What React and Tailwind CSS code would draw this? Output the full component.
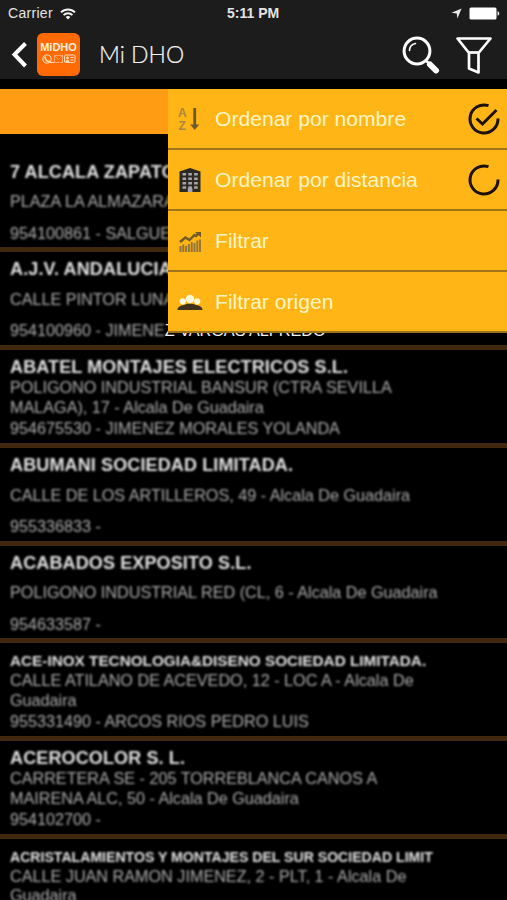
import React, { useState } from "react";

const companies = [
  {
    name: "7 ALCALA ZAPATO",
    address: ["PLAZA LA ALMAZARA"],
    phone: "954100861 - SALGUE",
  },
  {
    name: "A.J.V. ANDALUCIA",
    address: ["CALLE PINTOR LUNA"],
    phone: "954100960 - JIMENE",
    contact: "Z VARGAS ALFREDO",
  },
  {
    name: "ABATEL MONTAJES ELECTRICOS S.L.",
    address: ["POLIGONO INDUSTRIAL BANSUR (CTRA SEVILLA", "MALAGA), 17 - Alcala De Guadaira"],
    phone: "954675530 - JIMENEZ MORALES YOLANDA",
  },
  {
    name: "ABUMANI SOCIEDAD LIMITADA.",
    address: ["CALLE DE LOS ARTILLEROS, 49 - Alcala De Guadaira"],
    phone: "955336833 -",
  },
  {
    name: "ACABADOS EXPOSITO S.L.",
    address: ["POLIGONO INDUSTRIAL RED (CL, 6 - Alcala De Guadaira"],
    phone: "954633587 -",
  },
  {
    name: "ACE-INOX TECNOLOGIA&DISENO SOCIEDAD LIMITADA.",
    size: "text-[15.3px]",
    address: ["CALLE ATILANO DE ACEVEDO, 12 - LOC A - Alcala De", "Guadaira"],
    phone: "955331490 - ARCOS RIOS PEDRO LUIS",
  },
  {
    name: "ACEROCOLOR S. L.",
    address: ["CARRETERA SE - 205 TORREBLANCA CANOS A", "MAIRENA ALC, 50 - Alcala De Guadaira"],
    phone: "954102700 -",
  },
  {
    name: "ACRISTALAMIENTOS Y MONTAJES DEL SUR SOCIEDAD LIMIT",
    size: "text-[14.1px]",
    address: ["CALLE JUAN RAMON JIMENEZ, 2 - PLT, 1 - Alcala De", "Guadaira"],
    phone: "",
  },
];

const StatusBar = () => (
  <div className="relative flex h-[27px] items-center justify-between pl-2 pr-[7px] text-[14px] text-[#e4e4e4]">
    <div className="flex items-center gap-[7px]">
      <span className="tracking-[0.3px]">Carrier</span>
      <svg width="16" height="12" viewBox="0 0 16 12" fill="none" stroke="#f2f2f2" strokeWidth="2">
        <path d="M1 4.4a10 10 0 0 1 14 0" />
        <path d="M3.6 7.1a6.2 6.2 0 0 1 8.8 0" />
        <path d="M8 11.6 5.6 9.1a3.4 3.4 0 0 1 4.8 0z" fill="#f2f2f2" stroke="none" />
      </svg>
    </div>
    <span className="absolute left-[227px] text-[14px] font-bold">5:11 PM</span>
    <div className="flex items-center gap-[7px]">
      <svg width="11" height="11" viewBox="0 0 11 11" fill="#e8e8e8">
        <path d="M10.6.4 6.4 10.4 5.7 5.4.5 4.8z" />
      </svg>
      <svg width="31" height="13" viewBox="0 0 31 13" fill="#fff">
        <rect x="0.5" y="0.5" width="27" height="12" rx="1.5" />
        <path d="M28.6 4.3c2.2.4 2.2 4 0 4.4z" />
      </svg>
    </div>
  </div>
);

const Logo = () => (
  <div className="flex h-[43px] w-[43px] flex-col items-center rounded-[6px] bg-[#ff6a05] pt-[8px]">
    <span className="text-[11px] font-bold leading-[13px] text-[#fff0dc]">MiDHO</span>
    <svg width="34" height="10" viewBox="0 0 34 10" fill="none" stroke="#ffdcb8" strokeWidth="1">
      <circle cx="5" cy="5" r="4.1" />
      <path d="M3 2.5c0 3 2 5 5 5.2" strokeWidth="1.8" />
      <path d="M8 8.5h4" />
      <rect x="12.5" y="1.5" width="8" height="7" stroke="#ffa765" />
      <path d="m13 2 3.5 3.5L20 2" stroke="#ff9850" />
      <rect x="22.5" y="1" width="10.5" height="7.5" rx="1.5" />
      <path d="M24 7.5c0-2 3-2 3 0z" fill="#ffdcb8" />
      <circle cx="25.5" cy="3.8" r="1" fill="#ffdcb8" />
      <path d="M28.5 3.5h3M28.5 6h3" />
    </svg>
  </div>
);

const Header = () => (
  <div className="flex h-[52px] items-start pl-[11px] pt-[6px]">
    <svg className="mt-[8px]" width="17" height="28" viewBox="0 0 17 28" fill="none" stroke="#fff" strokeWidth="4">
      <path d="M14.5 2.5 3.5 13.5l11 11.5" />
    </svg>
    <div className="ml-[9px]">
      <Logo />
    </div>
    <span className="ml-[19px] mt-[5px] font-['Lato',sans-serif] text-[23px] font-light leading-[32px] text-[#f4f4f4] [-webkit-text-stroke:0.2px_#f4f4f4]">
      Mi DHO
    </span>
    <div className="ml-auto flex gap-[15px] pr-[14px] pt-[3px]">
      <svg width="38" height="39" viewBox="0 0 38 39" fill="none" stroke="#fff">
        <circle cx="15" cy="15" r="12.9" strokeWidth="3" />
        <path d="M7.5 14.5a7.5 7.5 0 0 1 6-7" strokeWidth="1.6" strokeLinecap="round" />
        <path d="m24 24.5 3.5 3.5" strokeWidth="2.5" />
        <path d="m28 28.5 6 6" strokeWidth="6" strokeLinecap="round" />
      </svg>
      <svg width="38" height="39" viewBox="0 0 38 39" fill="none" stroke="#fff" strokeWidth="2.7" strokeLinejoin="round">
        <path d="M2.5 2.5h33L23.5 17v19.5l-9.5-4V17z" />
        <path d="M14 16.5h9.5" />
      </svg>
    </div>
  </div>
);

const SortIcon = () => (
  <svg width="24" height="26" viewBox="0 0 24 26">
    <text x="0" y="10.5" fontSize="12" fontWeight="bold" fill="#aa8640">A</text>
    <text x="0.5" y="24" fontSize="12" fontWeight="bold" fill="#aa8640">Z</text>
    <path d="M16.7 2v18" stroke="#6b5935" strokeWidth="2.8" />
    <path d="M12.2 18.5h9L16.7 24z" fill="#6b5935" />
  </svg>
);

const BuildingIcon = () => (
  <svg width="24" height="26" viewBox="0 0 24 26">
    <path d="M1.5 4.5 12 1l10.5 3.5V25h-21z" fill="#2c2822" />
    <g fill="#a4a6ad">
      {[6, 10.5, 15, 19.3].map((y) =>
        [4.5, 10.3, 16.1].map((x) => <rect key={x + "-" + y} x={x} y={y} width="3.6" height="2.5" />)
      )}
      <rect x="9.8" y="21" width="4.6" height="4" />
    </g>
  </svg>
);

const ChartIcon = () => (
  <svg width="24" height="26" viewBox="0 0 24 26">
    <path d="m2 14 5.5-4.5 4 2.5 5-5 1.5 1 3.5-3.5" fill="none" stroke="#6f5a28" strokeWidth="2.4" />
    <path d="M17 4h6v5.5z" fill="#6f5a28" />
    <g fill="#94753a">
      <rect x="1.5" y="18" width="2" height="6" />
      <rect x="4.3" y="16.5" width="2" height="7.5" />
      <rect x="7.1" y="18" width="2" height="6" />
      <rect x="9.9" y="16" width="2" height="8" />
      <rect x="12.7" y="14" width="2" height="10" />
      <rect x="15.5" y="15" width="2" height="9" />
      <rect x="18.3" y="12.5" width="2" height="11.5" />
      <rect x="21" y="11.5" width="2" height="12.5" />
    </g>
  </svg>
);

const PeopleIcon = () => (
  <svg width="26" height="26" viewBox="0 0 26 26">
    <path d="M0.5 21c0-3 3-4.8 6.5-5.1 3-1.6 9-1.6 12 0 3.5.3 6.5 2.1 6.5 5.1z" fill="#40331d" />
    <g fill="#fff8d8">
      <circle cx="5.8" cy="12.3" r="3.1" />
      <circle cx="20.2" cy="12.3" r="3.1" />
      <circle cx="13" cy="10" r="4.2" />
    </g>
  </svg>
);

const Radio = ({ checked }) => (
  <svg width="34" height="34" viewBox="0 0 34 34" fill="none" stroke="#1d1204" strokeWidth="3">
    <path d="M21.5 3.7A14 14 0 1 0 31 16.5" />
    {checked && <path d="m9.5 16.5 6 5.5 14-14" />}
  </svg>
);

const Menu = () => {
  let [sort, setSort] = useState("nombre");

  let items = [
    { id: "nombre", label: "Ordenar por nombre", icon: <SortIcon />, radio: true },
    { id: "distancia", label: "Ordenar por distancia", icon: <BuildingIcon />, radio: true },
    { id: "filtrar", label: "Filtrar", icon: <ChartIcon /> },
    { id: "origen", label: "Filtrar origen", icon: <PeopleIcon /> },
  ];

  return (
    <div className="absolute right-0 top-[89px] w-[339px] bg-[#ffb516]">
      {items.map((item) => (
        <div
          key={item.id}
          onClick={() => item.radio && setSort(item.id)}
          className="flex h-[61px] items-center border-b-2 border-[#a07417] pr-[6px] pt-px"
        >
          <div className="flex w-[46px] justify-center pr-[2px]">{item.icon}</div>
          <span className="ml-px text-[21.1px] text-[#fff5c4]">{item.label}</span>
          {item.radio && (
            <div className="ml-auto">
              <Radio checked={sort === item.id} />
            </div>
          )}
        </div>
      ))}
    </div>
  );
};

const Company = ({ company }) => (
  <div className="flex h-[97.75px] shrink-0 flex-col whitespace-nowrap border-b-[5px] border-[#40280f] pl-[10px] text-[16.2px] text-[#acacac]">
    <div className="h-[28px] pt-[3px] font-bold leading-[28px] text-[#e2e2e2] blur-[1.3px]">
      <span className={company.size || "text-[18px] tracking-[0.13px]"}>{company.name}</span>
    </div>
    <div className="flex h-[39px] flex-col justify-center leading-[19.5px] blur-[1.3px]">
      {company.address.map((line) => (
        <span key={line}>{line}</span>
      ))}
    </div>
    <div className="flex leading-[22px]">
      <span className="blur-[1.3px]">{company.phone}</span>
      {company.contact && <span className="text-[#f0f0f0]">{company.contact}</span>}
    </div>
  </div>
);

export default function App() {
  return (
    <div className="relative flex h-[900px] w-full flex-col overflow-hidden bg-black font-['Liberation_Sans',Arial,sans-serif]">
      <div className="h-[79px] shrink-0 bg-[#1c1c1c]">
        <StatusBar />
        <Header />
      </div>
      <div className="mt-[10px] h-[45px] shrink-0 bg-[#ff9c14]" />
      <div className="mt-[20.5px] flex flex-col">
        {companies.map((company) => (
          <Company key={company.name} company={company} />
        ))}
      </div>
      <Menu />
    </div>
  );
}
